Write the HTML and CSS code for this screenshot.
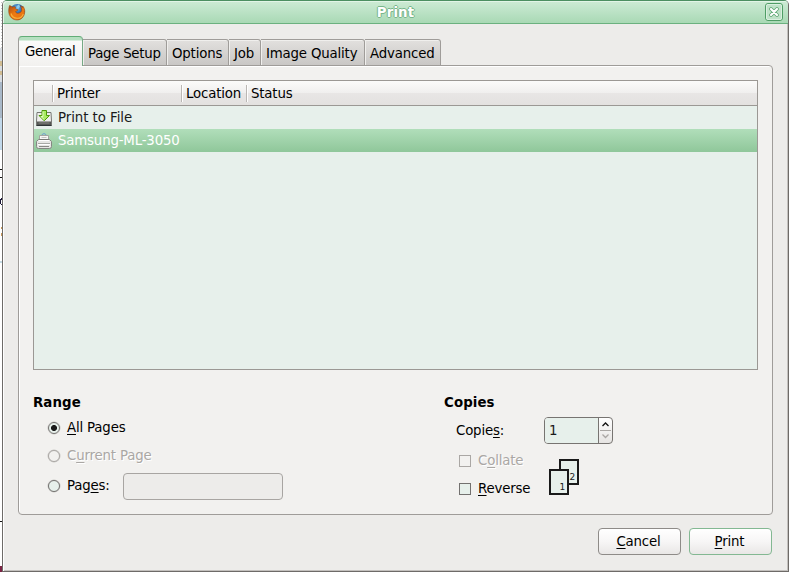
FILE: index.html
```html
<!DOCTYPE html>
<html lang="en">
<head>
<meta charset="utf-8">
<title>Print</title>
<link rel="stylesheet" href="styles.css">
</head>
<body>
<div class="screen">
  <svg class="backdrop" width="3" height="572" viewBox="0 0 3 572" shape-rendering="crispEdges">
    <path fill="#fff" d="M0 0h3v572H0z"/>
    <path stroke="#c4c6c8" stroke-dasharray="1 2" d="M1 2v46"/>
    <path fill="#d9dde2" d="M0 48h3v34H0z"/>
    <path fill="#d1bd93" d="M0 61h2v5H0zM0 71h2v4H0z"/>
    <path fill="#a9b9c9" d="M0 82h3v36H0z"/>
    <path fill="#c2d9eb" d="M0 118h3v32H0z"/>
    <path fill="#111" d="M0 169h2v1H0zM0 177h2v1H0zM0 521h2v1H0z"/>
    <path fill="#1b1636" d="M0 199h1v5H0zM1 198h1v2H1zM1 204h1v1H1z"/>
    <path fill="#c9985a" d="M1 227h1v2H1zM1 233h1v3H1z"/>
    <path fill="#c5dae3" d="M0 261h2v2H0z"/>
    <path fill="#7b2444" d="M0 566h2v6H0z"/>
  </svg>
  <div class="window">
    <header class="titlebar">
      <svg class="app-icon" width="18" height="18" viewBox="0 0 18 18">
        <defs>
          <radialGradient id="globe" cx=".45" cy=".3" r=".7"><stop offset="0" stop-color="#6cb9e8"/><stop offset=".6" stop-color="#255fa8"/><stop offset="1" stop-color="#173872"/></radialGradient>
          <linearGradient id="fox" x1="0" y1="0" x2="1" y2="1"><stop offset="0" stop-color="#a64a12"/><stop offset=".45" stop-color="#ef7a12"/><stop offset=".75" stop-color="#e87512"/><stop offset="1" stop-color="#b94a0c"/></linearGradient>
        </defs>
        <circle cx="9.3" cy="8.2" r="7.2" fill="url(#globe)"/>
        <path d="M8.500 3.500l2-2 1.500 1.500-1 2.500-2 .5z" fill="#8ac9ec"/>
        <path d="M1.500 2.500c1 .2 2 .9 2.700 1.600C5.500 3.500 6.800 3.600 7.600 4c-.5.900-.4 1.600.2 2.100l2 .3-.3 1.200-2 1c.4 1.700 2.500 2.300 4.600 1 .8-.5 1.300-1 1.500-2 .3-2-.4-3.700-1.200-4.800 1 .3 1.700.9 2.200 1.700l.2-1.400c1.500 1.700 2.200 4 1.900 6.300C16.200 14 13.200 16.800 9.400 17 5 17.200 1.300 14 .8 9.500.5 6.600.9 4.500 1.500 2.500z" fill="url(#fox)" stroke="#8d3b10" stroke-width=".5"/>
        <path d="M3 10.500c.7 2.800 3 4.700 6 4.800 3.300.1 5.400-1.700 6.300-4.300" fill="none" stroke="#f8b13c" stroke-width="1.100"/>
      </svg>
      <h1>Print</h1>
      <svg class="close" width="18" height="18" viewBox="0 0 18 18">
        <rect x=".5" y=".5" width="17" height="17" rx="2.500" fill="#bfe2c8" stroke="#4f9d65"/>
        <rect x="1.500" y="1.500" width="15" height="15" rx="1.500" fill="none" stroke="#d9f0df"/>
        <path d="M6 6l6 6M12 6l-6 6" stroke="#5ca671" stroke-width="3.800" stroke-linecap="round"/>
        <path d="M6 6l6 6M12 6l-6 6" stroke="#fff" stroke-width="2.200" stroke-linecap="round"/>
      </svg>
    </header>
    <main>
      <nav class="tabs">
        <a class="tab active"><span>General</span></a>
        <a class="tab setup"><span>Page Setup</span></a>
        <a class="tab options"><span>Options</span></a>
        <a class="tab job"><span>Job</span></a>
        <a class="tab quality"><span>Image Quality</span></a>
        <a class="tab advanced"><span>Advanced</span></a>
      </nav>
      <section class="panel">
        <div class="list">
          <div class="head"><span></span><span>Printer</span><span>Location</span><span>Status</span></div>
          <div class="row">
            <svg width="16" height="16" viewBox="0 0 16 16">
              <path d="M1 2.500h14l.5 8.500v4.500H.5V11z" fill="#eeeeec" stroke="#777975"/>
              <path d="M1 11.500h14v3.500H1z" fill="#555753"/>
              <path d="M.5 15.500h15" stroke="#2e3436"/>
              <path d="M2.500 13h11" stroke="#888a85"/>
              <path d="M6 .5h4.500v5h3L8.200 10.800 3 5.500h3z" fill="#a9ec62" stroke="#4e9a06"/>
              <path d="M7 1.500v5h-2l3.200 3" fill="none" stroke="#e0fac2"/>
            </svg>
            <span>Print to File</span>
          </div>
          <div class="row selected">
            <svg width="16" height="16" viewBox="0 0 16 16">
              <path d="M6 2C6 .2 10 .2 10 2" fill="none" stroke="#6d9ed0"/>
              <path d="M3.500 2.500h9v5h-9z" fill="#f6f6f5" stroke="#a3a5a0"/>
              <path d="M5.500 4.500h5" stroke="#c4c5c2"/>
              <path d="M2.500 6.500h11l2 2v5q0 2-2 2h-11q-2 0-2-2v-5z" fill="#e6e6e4" stroke="#858783"/>
              <path d="M3.500 6.500h9" stroke="#777975"/>
              <path d="M3 7.500h10" stroke="#fff"/>
              <path d="M2 10.500h12" stroke="#a8aaa6"/>
              <path d="M2 11.500h12" stroke="#fff"/>
              <path d="M3 13.500h10" stroke="#888a85"/>
            </svg>
            <span>Samsung-ML-3050</span>
          </div>
        </div>
        <div class="settings">
          <div class="range">
            <h2>Range</h2>
            <label class="option all"><i class="radio checked"></i><span><u>A</u>ll Pages</span></label>
            <label class="option current disabled"><i class="radio"></i><span>C<u>u</u>rrent Page</span></label>
            <label class="option pages"><i class="radio"></i><span>Pag<u>e</u>s:</span><i class="entry"></i></label>
          </div>
          <div class="copies">
            <h2>Copies</h2>
            <div class="count">
              <span class="count-label">Copie<u>s</u>:</span>
              <div class="spin">
                <span class="value">1</span>
                <svg width="13" height="24" viewBox="0 0 13 24">
                  <path d="M3.500 8l3-3 3 3" fill="none" stroke="#111" stroke-width="1.300"/>
                  <path d="M1 12.500h11" stroke="#aaa7a4"/>
                  <path d="M3.500 16.500l3 3 3-3" fill="none" stroke="#aaa7a4" stroke-width="1.300"/>
                </svg>
              </div>
            </div>
            <div class="order">
              <div>
                <label class="option collate disabled"><i class="check"></i><span>C<u>o</u>llate</span></label>
                <label class="option reverse"><i class="check"></i><span><u>R</u>everse</span></label>
              </div>
              <svg class="sheets" width="30" height="36" viewBox="0 0 30 36">
                <rect x="11" y="1" width="18" height="24" fill="#e7f0eb" stroke="#1a1a1a" stroke-width="2"/>
                <rect x="1" y="11" width="18" height="24" fill="#e7f0eb" stroke="#1a1a1a" stroke-width="2"/>
                <text x="20.500" y="21">2</text><text x="10.500" y="31">1</text>
              </svg>
            </div>
          </div>
        </div>
      </section>
      <footer>
        <button><span><u>C</u>ancel</span></button>
        <button class="default"><span><u>P</u>rint</span></button>
      </footer>
    </main>
  </div>
</div>
</body>
</html>
```

FILE: styles.css
```css
* { box-sizing: border-box; }
body {
  margin: 0;
  overflow: hidden;
  font: 13.33px/16px "DejaVu Sans", sans-serif;
  letter-spacing: -.17px;
  color: #000;
  background: #fff;
}
h1, h2 { margin: 0; font-size: 13.33px; line-height: 16px; letter-spacing: .1px; }
u { text-decoration: underline; text-underline-offset: 2px; text-decoration-thickness: 1px; text-decoration-skip-ink: none; }
svg { display: block; flex: none; }
.screen { display: flex; width: 789px; height: 572px; }
.backdrop { margin-right: -1px; }
.window {
  width: 787px;
  height: 572px;
  border: 1px solid #6e6b68;
  border-top-color: #4c8f61;
  border-radius: 5px 5px 0 0;
  background: #edecea;
  box-shadow: inset 1px 0 #fff, inset -1px -1px #c3c0bd;
}
.titlebar {
  display: flex;
  align-items: center;
  height: 23px;
  padding: 0 5px;
  border-bottom: 1px solid #6bb17f;
  border-radius: 4px 4px 0 0;
  background: linear-gradient(#cdebd5, #a9d9b5);
  box-shadow: inset 1px 1px #e2f5e7;
}
.titlebar h1 {
  flex: 1;
  padding-top: 2px;
  text-align: center;
  color: #fff;
  text-shadow: 1px 0 #78b58a, -1px 0 #78b58a, 0 1px #78b58a, 0 -1px #78b58a;
}
main { padding: 12px 15px 0; }
.tabs { display: flex; align-items: flex-end; height: 30px; margin-bottom: -1px; position: relative; }
.tab {
  height: 27px;
  padding: 6px 0 0 5px;
  border: 1px solid #9f9c99;
  border-left: 0;
  border-radius: 0 3px 0 0;
  background: linear-gradient(#e2e0de, #c9c7c5);
  box-shadow: inset 1px 1px #f0efed;
  white-space: nowrap;
}
.tab.active {
  width: 65px;
  height: 30px;
  padding: 7px 0 0 6px;
  border: 1px solid #9f9c99;
  border-top-color: #62ad77;
  border-right-color: #76a985;
  border-bottom: 0;
  border-radius: 4px 4px 0 0;
  background: linear-gradient(#b5e0c0 3px, #fbfbfa 4px, #f2f1ef);
  box-shadow: none;
  letter-spacing: -.3px;
}
.setup { width: 84px; letter-spacing: -.27px; }
.options { width: 62px; }
.job { width: 32px; }
.quality { width: 104px; }
.advanced { width: 76px; }
.panel {
  height: 450px;
  padding: 14px;
  border: 1px solid #9f9c99;
  border-radius: 0 4px 4px 4px;
  background: #f2f1ef;
  box-shadow: inset 1px 1px #fff;
}
.list { height: 290px; border: 1px solid #9b9894; background: #e7f0eb; width: 725px; }
.head {
  display: grid;
  grid-template-columns: 18px 129px 65px 1fr;
  height: 25px;
  border-bottom: 1px solid #9b9894;
  background: linear-gradient(#fbfbfa, #f0efee 50%, #e8e6e5 52%, #e3e1df);
}
.head span { padding: 1px 0 0 4px; margin: 4px 0 3px; }
.head span + span { border-left: 1px solid #bab7b4; box-shadow: inset 1px 0 #fff; }
.row { display: flex; gap: 6px; align-items: center; height: 23px; padding-left: 2px; color: #1a1a1a; }
.row:not(.selected) { letter-spacing: -.05px; }
.selected { color: #fff; background: linear-gradient(#b1deba, #8fc79a); }
.settings { display: flex; padding-top: 25px; }
.range { width: 411px; }
.option { display: flex; align-items: center; height: 16px; }
.disabled { color: #aaa7a4; text-shadow: 1px 1px #fff; }
.radio { width: 12px; height: 12px; margin: 0 7px 0 15px; border: 1px solid #73716f; border-radius: 50%; background: #e7f0eb; box-shadow: 0 0 0 .5px #c9c7c4; flex: none; }
.disabled .radio, .disabled .check { border-color: #aaa7a4; background: #f2f1ef; }
.checked { background: radial-gradient(circle at 50% 50%, #1a1a1a 2.600px, #e7f0eb 3.400px); }
.all { margin-top: 9px; }
.current { margin-top: 12px; }
.pages { margin-top: 8px; height: 27px; }
.entry { width: 160px; height: 27px; margin-left: 13px; margin-top: 2px; border: 1px solid #a8a5a2; border-radius: 4px; background: #edecea; }
.count { display: flex; align-items: center; height: 27px; margin-top: 6px; padding-left: 12px; }
.count-label { width: 88px; }
.spin { display: flex; width: 69px; height: 27px; border: 1px solid #777471; border-radius: 4px; background: linear-gradient(#fff, #e6e4e2); }
.spin .value { width: 54px; padding: 5px 0 0 4px; border-right: 1px solid #777471; border-radius: 3px 0 0 3px; background: #e7f0eb; color: #1a1a1a; }
.order { display: flex; }
.order > div { width: 105px; }
.check { width: 12px; height: 12px; margin: 0 7px 0 15px; border: 1px solid #73716f; background: #e7f0eb; flex: none; }
.collate { margin-top: 9px; }
.reverse { margin-top: 12px; }
.sheets { margin-top: 15px; }
.sheets text { font-size: 9px; fill: #1a1a1a; }
footer { display: flex; justify-content: flex-end; gap: 8px; padding: 13px 1px 0 0; }
button { width: 83px; height: 27px; padding: 0 2px 0 0; border: 1px solid #8e8b88; border-radius: 4px; background: linear-gradient(#fff, #f7f6f6 50%, #e9e7e6); font: inherit; letter-spacing: inherit; color: #000; }
.default { border-color: #83b892; }
```
